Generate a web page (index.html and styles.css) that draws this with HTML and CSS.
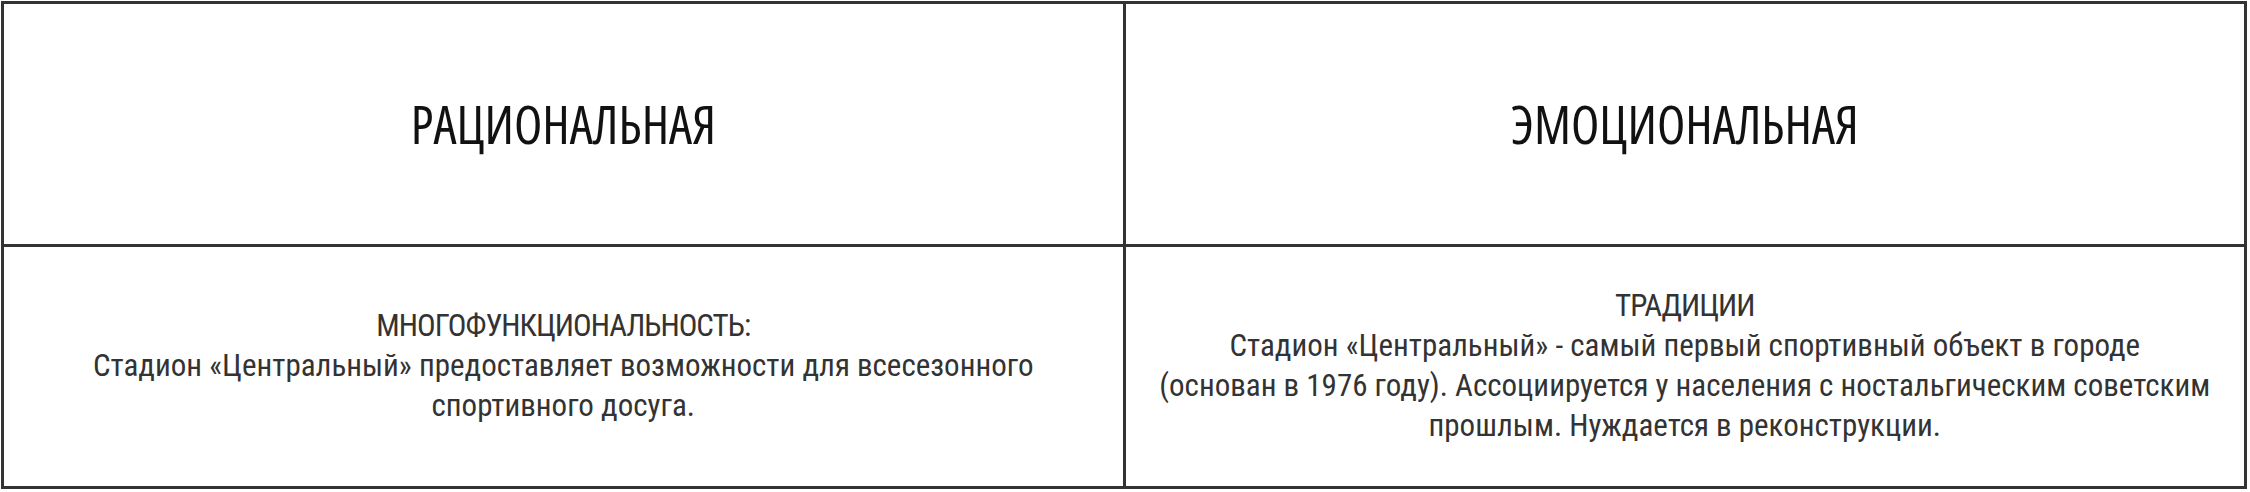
FILE: index.html
```html
<!DOCTYPE html>
<html lang="ru">
<head>
<meta charset="utf-8">
<title>Рациональная и эмоциональная</title>
<link rel="stylesheet" href="styles.css">
</head>
<body>
<div class="table">
  <div class="cell head">РАЦИОНАЛЬНАЯ</div>
  <div class="cell head">ЭМОЦИОНАЛЬНАЯ</div>
  <div class="cell body">
    <p><span class="label">МНОГОФУНКЦИОНАЛЬНОСТЬ:</span><br>Стадион «Центральный» предоставляет возможности для всесезонного<br>спортивного досуга.</p>
  </div>
  <div class="cell body">
    <p><span class="label">ТРАДИЦИИ</span><br>Стадион «Центральный» - самый первый спортивный объект в городе<br>(основан в 1976 году). Ассоциируется у населения с ностальгическим советским<br>прошлым. Нуждается в реконструкции.</p>
  </div>
</div>
</body>
</html>
```
FILE: styles.css
```css
html, body {
  margin: 0;
  padding: 0;
  background: #fff;
}
body {
  padding: 1px;
}
.table {
  width: 2246px;
  height: 488px;
  box-sizing: border-box;
  display: grid;
  grid-template-columns: 1fr 1fr;
  grid-template-rows: 1fr 1fr;
  gap: 3px;
  padding: 3px;
  background: #333;
}
.cell {
  background: #fff;
  display: flex;
  align-items: center;
  justify-content: center;
  text-align: center;
}
.head {
  font-family: "Open Sans", "Roboto Condensed", sans-serif;
  font-stretch: 75%;
  font-size: 52px;
  color: #111;
}
.body {
  font-family: "Roboto Condensed", Roboto, sans-serif;
  font-size: 31px;
  line-height: 40px;
  color: #333;
}
.body p {
  margin: 0;
}
.label {
  letter-spacing: -1px;
}
```
